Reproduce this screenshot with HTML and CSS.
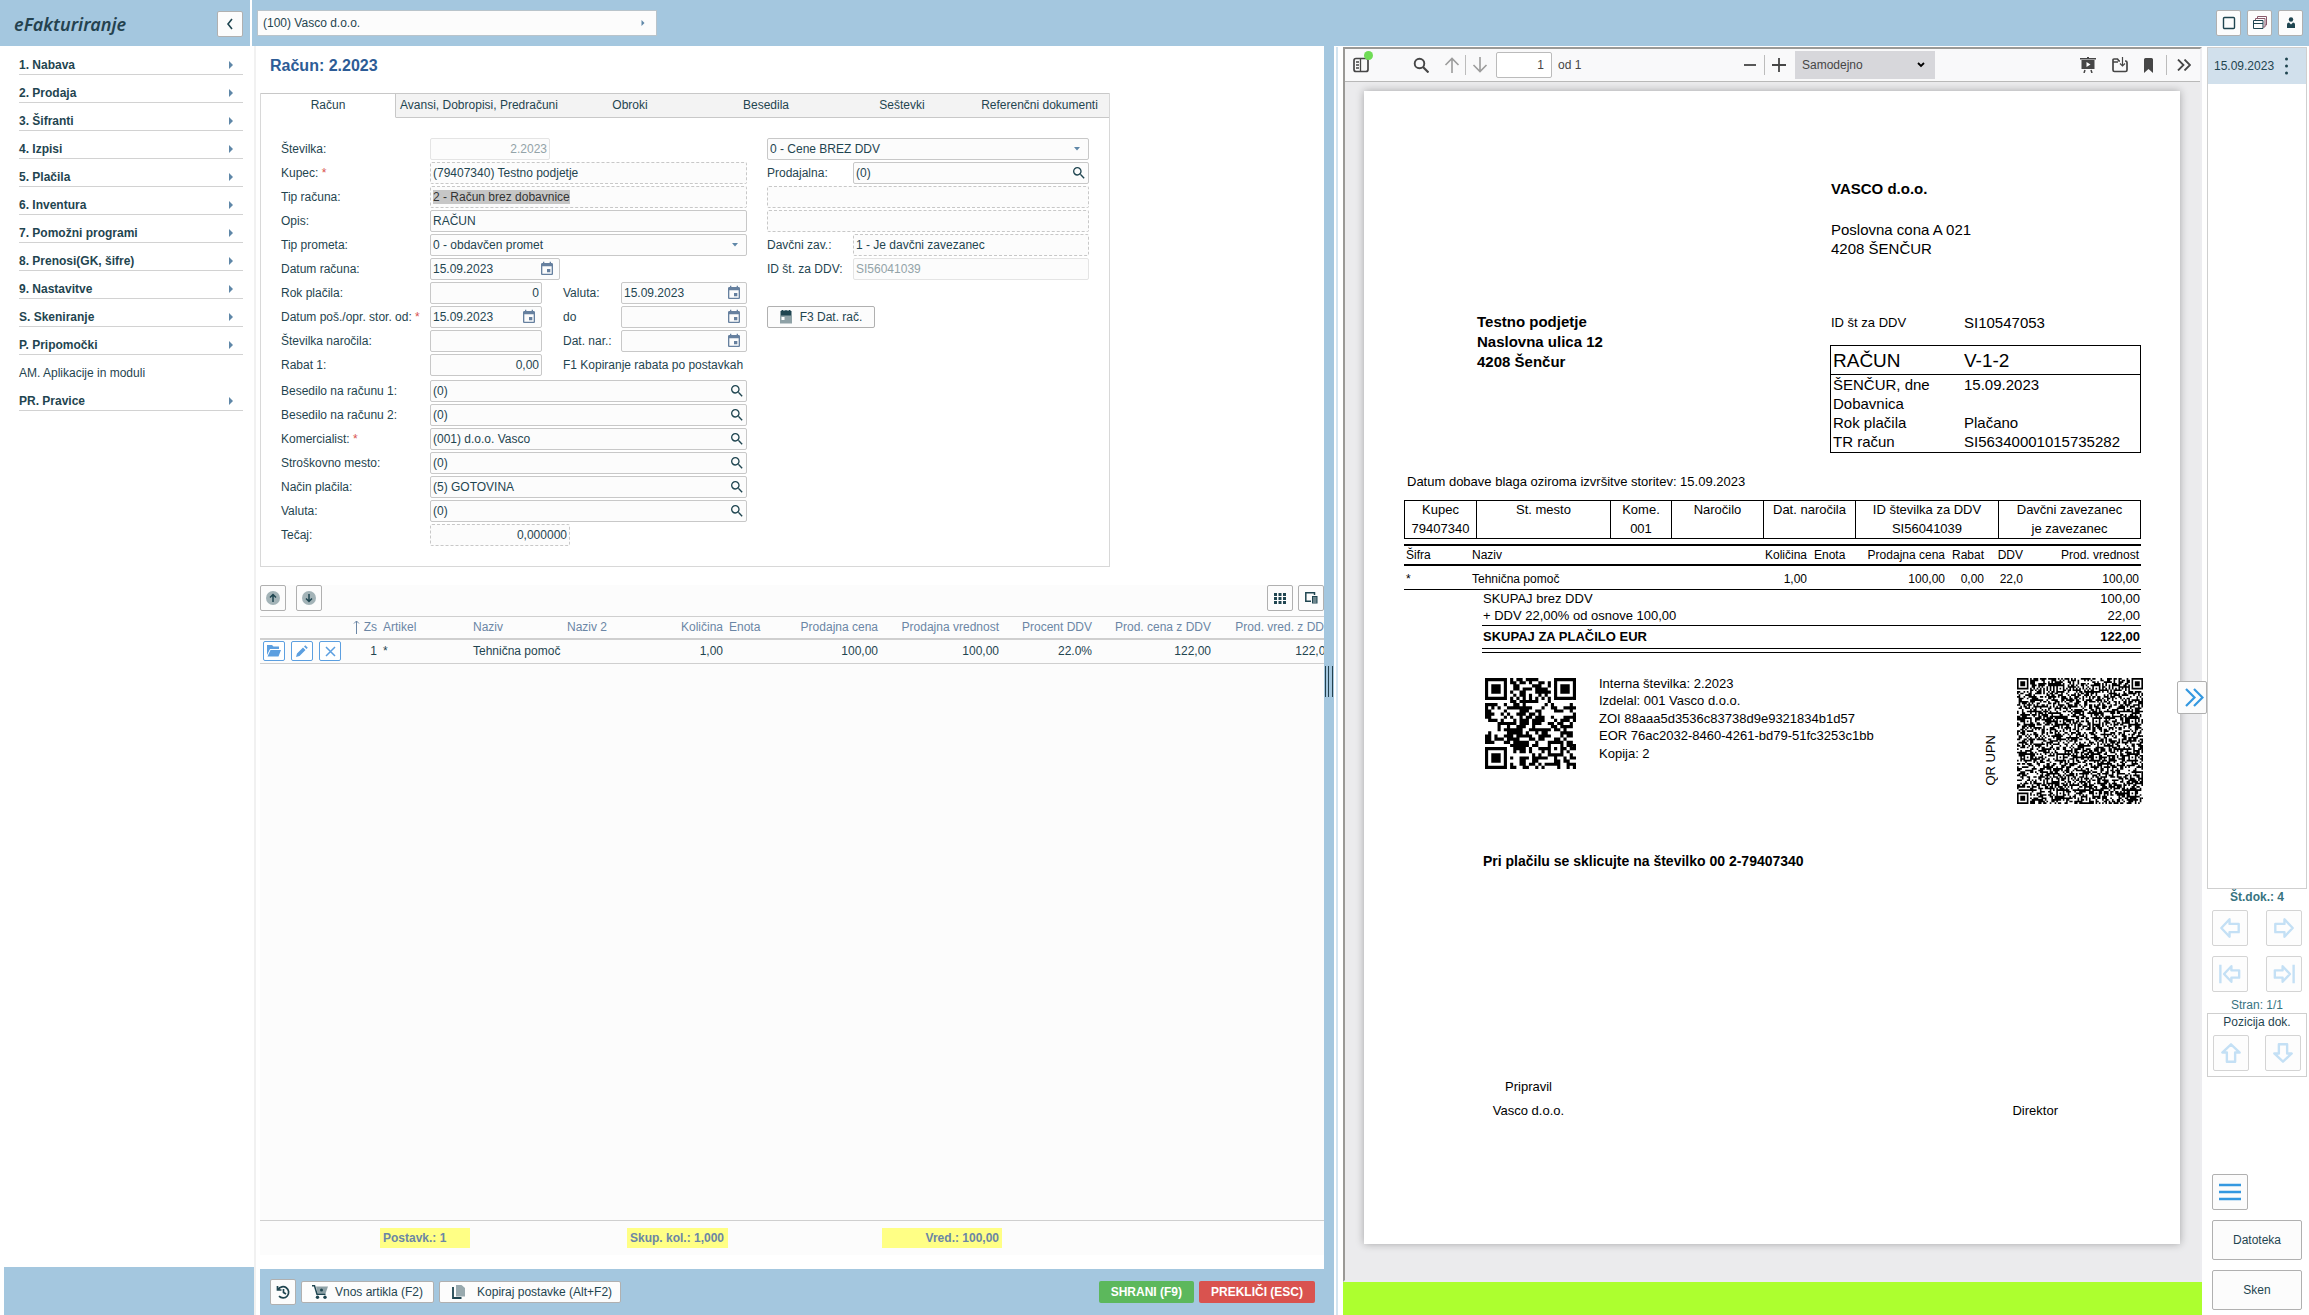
FILE: index.html
```html
<!DOCTYPE html>
<html lang="sl">
<head>
<meta charset="utf-8">
<title>eFakturiranje</title>
<link rel="stylesheet" href="styles.css">
</head>
<body>
<svg class="sprite" aria-hidden="true">
  <symbol id="i-search" viewBox="0 0 24 24"><path d="M15.5 14h-.79l-.28-.27A6.471 6.471 0 0 0 16 9.5 6.5 6.5 0 1 0 9.5 16c1.61 0 3.09-.59 4.23-1.57l.27.28v.79l5 4.99L20.49 19l-4.99-5zm-6 0C7.01 14 5 11.99 5 9.5S7.01 5 9.5 5 14 7.01 14 9.5 11.99 14 9.5 14z"/></symbol>
  <symbol id="i-cal" viewBox="0 0 24 24"><path d="M17 12h-5v5h5v-5zM16 1v2H8V1H6v2H5c-1.11 0-1.99.9-1.99 2L3 19c0 1.1.89 2 2 2h14c1.1 0 2-.9 2-2V5c0-1.1-.9-2-2-2h-1V1h-2zm3 18H5V8h14v11z"/></symbol>
  <symbol id="i-down" viewBox="0 0 6 4"><path d="M0 0h6L3 3.5z"/></symbol>
  <symbol id="i-right" viewBox="0 0 4 8"><path d="M0 0l4 4-4 4z"/></symbol>
  <symbol id="i-arrow" viewBox="0 0 24 24"><path d="M11.5 2.5L2.5 12l9 9.500v-5H21.500v-9H11.500z" fill="none" stroke="currentColor" stroke-width="2.600" stroke-linejoin="round"/></symbol>
  <symbol id="i-arrow-end" viewBox="0 0 24 24"><path d="M13.500 3.500L5.500 12l8 8.500v-4.500H22v-8h-8.500zM1.500 2v20" fill="none" stroke="currentColor" stroke-width="2.600" stroke-linejoin="round"/></symbol>
</svg>

<header class="topbar">
  <div class="brand">
    <span class="brand-name">eFakturiranje</span>
    <button class="btn collapse" aria-label="Skrij meni"><svg width="8" height="12" viewBox="0 0 8 12"><path d="M6 1L2 6l4 5" fill="none" stroke="currentColor" stroke-width="1.600"/></svg></button>
  </div>
  <div class="topbar-main">
    <button class="company"><span>(100) Vasco d.o.o.</span><svg width="4" height="6"><use href="#i-right"/></svg></button>
    <div class="window-buttons">
      <button class="btn" aria-label="Okno"><svg width="14" height="14" viewBox="0 0 14 14"><rect x="1.500" y="1.500" width="11" height="11" rx="1" fill="none" stroke="currentColor" stroke-width="1.400"/></svg></button>
      <button class="btn" aria-label="Okna"><svg width="15" height="15" viewBox="0 0 15 15"><path d="M1.500 5.500h9.500v8H1.500zM1.500 8.500H11" fill="none" stroke="currentColor"/><path d="M3.500 5V3.500h9.500v8.500h-2M5.500 3V1.500h9V10h-1.500" fill="none" stroke="#8a5a6c"/></svg></button>
      <button class="btn" aria-label="Uporabnik"><svg width="10" height="12" viewBox="0 0 10 12"><circle cx="5" cy="2.500" r="2.200"/><path d="M1 11V7.500Q1 5.500 3 5.500l2 2 2-2q2 0 2 2V11z"/></svg></button>
    </div>
  </div>
</header>

<div class="workspace">
  <aside class="sidebar">
    <nav class="menu">
      <a href="#">1. Nabava<svg width="4" height="8"><use href="#i-right"/></svg></a>
      <a href="#">2. Prodaja<svg width="4" height="8"><use href="#i-right"/></svg></a>
      <a href="#">3. Šifranti<svg width="4" height="8"><use href="#i-right"/></svg></a>
      <a href="#">4. Izpisi<svg width="4" height="8"><use href="#i-right"/></svg></a>
      <a href="#">5. Plačila<svg width="4" height="8"><use href="#i-right"/></svg></a>
      <a href="#">6. Inventura<svg width="4" height="8"><use href="#i-right"/></svg></a>
      <a href="#">7. Pomožni programi<svg width="4" height="8"><use href="#i-right"/></svg></a>
      <a href="#">8. Prenosi(GK, šifre)<svg width="4" height="8"><use href="#i-right"/></svg></a>
      <a href="#">9. Nastavitve<svg width="4" height="8"><use href="#i-right"/></svg></a>
      <a href="#">S. Skeniranje<svg width="4" height="8"><use href="#i-right"/></svg></a>
      <a href="#">P. Pripomočki<svg width="4" height="8"><use href="#i-right"/></svg></a>
      <a href="#" class="leaf">AM. Aplikacije in moduli</a>
      <a href="#">PR. Pravice<svg width="4" height="8"><use href="#i-right"/></svg></a>
    </nav>
    <div class="sidebar-foot"></div>
  </aside>

  <main class="main">
    <h1>Račun: 2.2023</h1>
    <section class="panel">
      <div class="tabs">
        <button class="tab active">Račun</button>
        <button class="tab">Avansi, Dobropisi, Predračuni</button>
        <button class="tab">Obroki</button>
        <button class="tab">Besedila</button>
        <button class="tab">Seštevki</button>
        <button class="tab">Referenčni dokumenti</button>
      </div>
      <form class="form">
        <div class="form-col left">
          <div class="row"><label for="f1">Številka:</label><div class="field w120 off"><input id="f1" class="num" value="2.2023" disabled></div></div>
          <div class="row"><label for="f2">Kupec: <i>*</i></label><div class="field dash"><input id="f2" value="(79407340) Testno podjetje" readonly></div></div>
          <div class="row"><label for="f3">Tip računa:</label><div class="field dash"><input id="f3" class="marked" value="2 - Račun brez dobavnice" readonly></div></div>
          <div class="row"><label for="f4">Opis:</label><div class="field"><input id="f4" value="RAČUN"></div></div>
          <div class="row"><label for="f5">Tip prometa:</label><div class="field"><select id="f5"><option>0 - obdavčen promet</option></select><svg class="caret" width="6" height="4"><use href="#i-down"/></svg></div></div>
          <div class="row"><label for="f6">Datum računa:</label><div class="field w130"><input id="f6" value="15.09.2023"><svg class="cal" width="16" height="16"><use href="#i-cal"/></svg></div></div>
          <div class="row"><label for="f7">Rok plačila:</label><div class="field w112"><input id="f7" class="num" value="0"></div><label class="second" for="f8">Valuta:</label><div class="field"><input id="f8" value="15.09.2023"><svg class="cal" width="16" height="16"><use href="#i-cal"/></svg></div></div>
          <div class="row"><label for="f9">Datum poš./opr. stor. od: <i>*</i></label><div class="field w112"><input id="f9" value="15.09.2023"><svg class="cal" width="16" height="16"><use href="#i-cal"/></svg></div><label class="second" for="f10">do</label><div class="field"><input id="f10"><svg class="cal" width="16" height="16"><use href="#i-cal"/></svg></div></div>
          <div class="row"><label for="f11">Številka naročila:</label><div class="field w112"><input id="f11"></div><label class="second" for="f12">Dat. nar.:</label><div class="field"><input id="f12"><svg class="cal" width="16" height="16"><use href="#i-cal"/></svg></div></div>
          <div class="row spaced"><label for="f13">Rabat 1:</label><div class="field w112"><input id="f13" class="num" value="0,00"></div><a class="note" href="#">F1 Kopiranje rabata po postavkah</a></div>
          <div class="row"><label for="f14">Besedilo na računu 1:</label><div class="field"><input id="f14" value="(0)"><svg class="find" width="16" height="16"><use href="#i-search"/></svg></div></div>
          <div class="row"><label for="f15">Besedilo na računu 2:</label><div class="field"><input id="f15" value="(0)"><svg class="find" width="16" height="16"><use href="#i-search"/></svg></div></div>
          <div class="row"><label for="f16">Komercialist: <i>*</i></label><div class="field"><input id="f16" value="(001) d.o.o. Vasco"><svg class="find" width="16" height="16"><use href="#i-search"/></svg></div></div>
          <div class="row"><label for="f17">Stroškovno mesto:</label><div class="field"><input id="f17" value="(0)"><svg class="find" width="16" height="16"><use href="#i-search"/></svg></div></div>
          <div class="row"><label for="f18">Način plačila:</label><div class="field"><input id="f18" value="(5) GOTOVINA"><svg class="find" width="16" height="16"><use href="#i-search"/></svg></div></div>
          <div class="row"><label for="f19">Valuta:</label><div class="field"><input id="f19" value="(0)"><svg class="find" width="16" height="16"><use href="#i-search"/></svg></div></div>
          <div class="row"><label for="f20">Tečaj:</label><div class="field dash w140"><input id="f20" class="num" value="0,000000" readonly></div></div>
        </div>
        <div class="form-col right">
          <div class="row"><div class="field"><select aria-label="Cene"><option>0 - Cene BREZ DDV</option></select><svg class="caret" width="6" height="4"><use href="#i-down"/></svg></div></div>
          <div class="row"><label for="g1">Prodajalna:</label><div class="field"><input id="g1" value="(0)"><svg class="find" width="16" height="16"><use href="#i-search"/></svg></div></div>
          <div class="row"><div class="field dash"><input aria-label="Naslov 1" readonly></div></div>
          <div class="row"><div class="field dash"><input aria-label="Naslov 2" readonly></div></div>
          <div class="row"><label for="g2">Davčni zav.:</label><div class="field dash"><input id="g2" value="1 - Je davčni zavezanec" readonly></div></div>
          <div class="row"><label for="g3">ID št. za DDV:</label><div class="field off"><input id="g3" value="SI56041039" disabled></div></div>
          <div class="row"></div>
          <div class="row"><button type="button" class="btn date-btn"><svg width="12" height="14" viewBox="0 0 12 14"><path d="M1 1h10v4H1zM2.500 0v2M6 0v2M9.500 0v2" stroke="currentColor"/><path d="M0 5h12v8.500H0z" opacity=".5"/><rect x="1.500" y="7" width="3" height="3" fill="#fff"/></svg>F3 Dat. rač.</button></div>
        </div>
      </form>
    </section>

    <section class="items">
      <div class="items-tools">
        <button class="btn sq" aria-label="Gor"><svg width="14" height="14" viewBox="0 0 14 14"><circle cx="7" cy="7" r="7" opacity=".4"/><path d="M7 11V3.500M4 6.500l3-3 3 3" fill="none" stroke="currentColor" stroke-width="1.500"/></svg></button>
        <button class="btn sq" aria-label="Dol"><svg width="14" height="14" viewBox="0 0 14 14"><circle cx="7" cy="7" r="7" opacity=".4"/><path d="M7 3v7.500M4 7.500l3 3 3-3" fill="none" stroke="currentColor" stroke-width="1.500"/></svg></button>
        <span class="grow"></span>
        <button class="btn sq" aria-label="Stolpci"><svg width="12" height="11" viewBox="0 0 12 11"><path d="M0 0h3v3H0zM4.500 0h3v3h-3zM9 0h3v3H9zM0 4h3v3H0zM4.500 4h3v3h-3zM9 4h3v3H9zM0 8h3v3H0zM4.500 8h3v3h-3zM9 8h3v3H9z"/></svg></button>
        <button class="btn sq" aria-label="Izvoz"><svg width="13" height="12" viewBox="0 0 13 12"><path d="M9.500 3V.8H.8v8.500H6" fill="none" stroke="currentColor" stroke-width="1.500"/><path d="M7 4h5.500v7.500H7z"/><path d="M8 6h3.500M8 8h3.500M8 10h3.500" stroke="#fff" stroke-width=".7"/></svg></button>
      </div>
      <div class="table-wrap">
        <table class="grid">
          <colgroup><col class="c90"><col class="c30"><col class="c90"><col class="c94"><col class="c76"><col class="c86"><col class="c64"><col class="c91"><col class="c121"><col class="c93"><col class="c119"><col class="c121"></colgroup>
          <thead><tr><th></th><th class="r sorted"><span class="zs"><svg width="7" height="14" viewBox="0 0 7 14"><path d="M3.500 14V1M1 3.500L3.500 1 6 3.500" fill="none" stroke="currentColor"/></svg>Zs</span></th><th>Artikel</th><th>Naziv</th><th>Naziv 2</th><th class="r">Količina</th><th>Enota</th><th class="r">Prodajna cena</th><th class="r">Prodajna vrednost</th><th class="r">Procent DDV</th><th class="r">Prod. cena z DDV</th><th class="r">Prod. vred. z DDV</th></tr></thead>
          <tbody><tr>
            <td><div class="acts">
              <button aria-label="Odpri"><svg width="14" height="12" viewBox="0 0 14 12"><path d="M0 0h5l1.500 1.500H12V4H3L0 10zM3.500 5H14l-2.500 6.500H.5z"/></svg></button>
              <button aria-label="Uredi"><svg width="12" height="12" viewBox="0 0 12 12"><path d="M0 12l1-3.500 6-6L9.500 5l-6 6zM8 1.500L9.300.2l2.500 2.500-1.300 1.300z"/></svg></button>
              <button aria-label="Briši"><svg width="11" height="11" viewBox="0 0 11 11"><path d="M1 1l9 9M10 1l-9 9" stroke="currentColor" stroke-width="1.500"/></svg></button>
            </div></td><td class="r">1</td><td>*</td><td>Tehnična pomoč</td><td></td><td class="r">1,00</td><td></td><td class="r">100,00</td><td class="r">100,00</td><td class="r">22.0%</td><td class="r">122,00</td><td class="r">122,00</td>
          </tr></tbody>
        </table>
      </div>
      <div class="sums"><span class="sum s1">Postavk.: 1</span><span class="sum s2">Skup. kol.: 1,000</span><span class="sum s3">Vred.: 100,00</span></div>
    </section>

    <footer class="actions">
      <button class="btn sq" aria-label="Zgodovina"><svg width="14" height="14" viewBox="0 0 14 14"><path d="M2.200 4.500A5.600 5.600 0 1 1 3 11.200M1.500 1v4h4M7.500 4v3.500l2.500 1.500" fill="none" stroke="currentColor" stroke-width="1.700"/></svg></button>
      <button class="btn txt"><svg width="16" height="14" viewBox="0 0 16 14"><path d="M0 .8h2.500L5 9.300h8.500" fill="none" stroke="currentColor" stroke-width="1.500"/><path d="M4 1.500h12L13.500 8.500H5.500z" opacity=".5"/><circle cx="9.500" cy="5" r="1.500"/><circle cx="5.500" cy="12.300" r="1.700"/><circle cx="13" cy="12.300" r="1.700"/></svg>Vnos artikla (F2)</button>
      <button class="btn txt copy"><svg width="13" height="14" viewBox="0 0 13 14"><path d="M1 2v11h8.500" fill="none" stroke="currentColor" stroke-width="1.800"/><path d="M4 0h5.500L13 3v8.500H4z" opacity=".45"/></svg>Kopiraj postavke (Alt+F2)</button>
      <span class="grow"></span>
      <button class="save">SHRANI (F9)</button>
      <button class="cancel">PREKLIČI (ESC)</button>
    </footer>
  </main>

  <div class="splitter"><span class="grip"></span></div>

  <section class="viewer-wrap">
    <div class="viewer">
      <div class="pdf-tools">
        <button class="pdf-side" aria-label="Stranska vrstica"><svg width="16" height="16" viewBox="0 0 16 16"><rect x="1" y="1.500" width="14" height="13" rx="2" fill="none" stroke="currentColor" stroke-width="1.700"/><path d="M7.500 2v12.500M3 5h3M3 8h3M3 11h3" stroke="currentColor" stroke-width="1.300"/></svg><span class="dot"></span></button>
        <button aria-label="Najdi"><svg width="16" height="16" viewBox="0 0 16 16"><circle cx="6.500" cy="6.500" r="4.800" fill="none" stroke="currentColor" stroke-width="1.900"/><path d="M10 10l5.500 5.500" stroke="currentColor" stroke-width="2.200"/></svg></button>
        <button class="dim up" aria-label="Prejšnja"><svg width="16" height="16" viewBox="0 0 16 16"><path d="M8 16V1.500M1.500 8L8 1.500 14.500 8" fill="none" stroke="currentColor" stroke-width="1.600"/></svg></button>
        <span class="sep"></span>
        <button class="dim down" aria-label="Naslednja"><svg width="16" height="16" viewBox="0 0 16 16"><path d="M8 0v14.500M1.500 8L8 14.500 14.500 8" fill="none" stroke="currentColor" stroke-width="1.600"/></svg></button>
        <input class="page-no" value="1" aria-label="Stran"><span class="of">od 1</span>
        <span class="grow"></span>
        <button aria-label="Pomanjšaj"><svg width="14" height="14" viewBox="0 0 14 14"><path d="M1 7h12" stroke="currentColor" stroke-width="1.800"/></svg></button>
        <span class="sep zoom-sep"></span>
        <button aria-label="Povečaj"><svg width="14" height="14" viewBox="0 0 14 14"><path d="M0 7h14M7 0v14" stroke="currentColor" stroke-width="1.800"/></svg></button>
        <div class="scale"><select aria-label="Povečava"><option>Samodejno</option></select><svg width="8" height="6" viewBox="0 0 8 6"><path d="M1 1l3 3 3-3" fill="none" stroke="#000" stroke-width="1.800"/></svg></div>
        <span class="grow"></span>
        <div class="pdf-right">
          <button aria-label="Predstavitev"><svg width="16" height="16" viewBox="0 0 16 16"><path d="M0 1h16v1.500H0zM1.500 3h13v9h-13zM7 0h2v2H7z"/><path d="M6.500 5v5l4-2.500z" fill="#fff"/><path d="M4 16l1-3M12 16l-1-3" stroke="currentColor" stroke-width="1.500"/></svg></button>
          <button aria-label="Odpri"><svg width="16" height="16" viewBox="0 0 16 16"><path d="M8 4H7L5.500 2H2Q1 2 1 3v10q0 1.500 1.500 1.500h11Q15 14.500 15 13V5.500Q15 4 13.500 4H13M1 5h5" fill="none" stroke="currentColor" stroke-width="1.700"/><path d="M10.500 0v8.500M8 6.500L10.500 9 13 6.500" fill="none" stroke="currentColor" stroke-width="1.200"/></svg></button>
          <button aria-label="Zaznamek"><svg width="9" height="15" viewBox="0 0 9 15"><path d="M0 1.500Q0 0 1.500 0h6Q9 0 9 1.500V15l-4.500-4L0 15z"/></svg></button>
          <span class="sep"></span>
          <button aria-label="Orodja"><svg width="14" height="12" viewBox="0 0 14 12"><path d="M1 .5L6.500 6 1 11.500M7.500.5L13 6l-5.500 5.500" fill="none" stroke="currentColor" stroke-width="1.800"/></svg></button>
        </div>
      </div>
      <div class="pdf-body">
        <article class="sheet">
          <div class="sender"><strong>VASCO d.o.o.</strong><span>Poslovna cona A 021</span><span>4208 ŠENČUR</span></div>
          <div class="parties">
            <address>Testno podjetje<br>Naslovna ulica 12<br>4208 Šenčur</address>
            <div>
              <div class="vat"><span>ID št za DDV</span><span>SI10547053</span></div>
              <dl class="docbox">
                <div class="head"><dt>RAČUN</dt><dd>V-1-2</dd></div>
                <div><dt>ŠENČUR, dne</dt><dd>15.09.2023</dd></div>
                <div><dt>Dobavnica</dt><dd></dd></div>
                <div><dt>Rok plačila</dt><dd>Plačano</dd></div>
                <div><dt>TR račun</dt><dd>SI56340001015735282</dd></div>
              </dl>
            </div>
          </div>
          <p class="supply">Datum dobave blaga oziroma izvršitve storitev: 15.09.2023</p>
          <table class="meta">
            <colgroup><col class="c72"><col class="c134"><col class="c61"><col class="c92"><col class="c92"><col class="c143"><col></colgroup>
            <tr><th>Kupec</th><th>St. mesto</th><th>Kome.</th><th>Naročilo</th><th>Dat. naročila</th><th>ID številka za DDV</th><th>Davčni zavezanec</th></tr>
            <tr><td>79407340</td><td></td><td>001</td><td></td><td></td><td>SI56041039</td><td>je zavezanec</td></tr>
          </table>
          <table class="lines">
            <colgroup><col class="c66"><col><col class="c69"><col class="c51"><col class="c87"><col class="c39"><col class="c39"><col class="c116"></colgroup>
            <thead><tr><th>Šifra</th><th>Naziv</th><th class="r">Količina</th><th class="unit">Enota</th><th class="r">Prodajna cena</th><th class="r">Rabat</th><th class="r">DDV</th><th class="r">Prod. vrednost</th></tr></thead>
            <tbody><tr><td>*</td><td>Tehnična pomoč</td><td class="r">1,00</td><td></td><td class="r">100,00</td><td class="r">0,00</td><td class="r">22,0</td><td class="r">100,00</td></tr></tbody>
          </table>
          <div class="totals">
            <div><span>SKUPAJ brez DDV</span><span>100,00</span></div>
            <div><span>+ DDV 22,00% od osnove 100,00</span><span>22,00</span></div>
            <div class="due"><span>SKUPAJ ZA PLAČILO EUR</span><span>122,00</span></div>
          </div>
          <div class="codes">
            <svg class="qr small" data-size="29" data-seed="7" data-align="22"></svg>
            <div class="code-text"><span>Interna številka: 2.2023</span><span>Izdelal: 001 Vasco d.o.o.</span><span>ZOI 88aaa5d3536c83738d9e9321834b1d57</span><span>EOR 76ac2032-8460-4261-bd79-51fc3253c1bb</span><span>Kopija: 2</span></div>
            <span class="grow"></span>
            <span class="upn">QR UPN</span>
            <svg class="qr large" data-size="77" data-seed="31" data-align="6,26,48,70"></svg>
          </div>
          <p class="refer">Pri plačilu se sklicujte na številko 00 2-79407340</p>
          <div class="sign"><div><span>Pripravil</span><span>Vasco d.o.o.</span></div><div class="director">Direktor</div></div>
        </article>
      </div>
    </div>
    <div class="status"></div>
  </section>

  <aside class="docs">
    <button class="btn hide-docs" aria-label="Skrij"><svg width="19" height="19" viewBox="0 0 19 19"><path d="M1 1l8.500 8.500L1 18M9 1l8.500 8.500L9 18" fill="none" stroke="currentColor" stroke-width="2.200"/></svg></button>
    <div class="doc-list"><a class="doc" href="#">15.09.2023<svg width="3" height="18" viewBox="0 0 3 18"><circle cx="1.500" cy="2" r="1.500"/><circle cx="1.500" cy="9" r="1.500"/><circle cx="1.500" cy="16" r="1.500"/></svg></a></div>
    <div class="count">Št.dok.: 4</div>
    <div class="pair"><button class="nav" aria-label="Nazaj"><svg width="22" height="22"><use href="#i-arrow"/></svg></button><button class="nav" aria-label="Naprej"><svg class="flip" width="22" height="22"><use href="#i-arrow"/></svg></button></div>
    <div class="pair"><button class="nav" aria-label="Prvi"><svg width="22" height="22"><use href="#i-arrow-end"/></svg></button><button class="nav" aria-label="Zadnji"><svg class="flip" width="22" height="22"><use href="#i-arrow-end"/></svg></button></div>
    <div class="pageinfo">Stran: 1/1</div>
    <div class="position"><span>Pozicija dok.</span><div class="pair"><button class="nav" aria-label="Višje"><svg class="turn-up" width="22" height="22"><use href="#i-arrow"/></svg></button><button class="nav" aria-label="Nižje"><svg class="turn-down" width="22" height="22"><use href="#i-arrow"/></svg></button></div></div>
    <span class="grow"></span>
    <button class="btn lines-btn" aria-label="Meni"><svg width="22" height="18" viewBox="0 0 22 18"><path d="M0 2h22M0 9h22M0 16h22" stroke="currentColor" stroke-width="2.600"/></svg></button>
    <button class="btn wide">Datoteka</button>
    <button class="btn wide">Sken</button>
  </aside>
</div>
<script src="qr.js"></script>
</body>
</html>
```
FILE: styles.css
```css
* { box-sizing: border-box; }
html { height: 100%; }
body {
  margin: 0;
  min-height: 100vh;
  display: flex;
  flex-direction: column;
  background: #fff;
  color: #1f4550;
  font: 12px/16px "Liberation Sans", Arial, sans-serif;
}
button, input, select { font: inherit; color: inherit; margin: 0; }
button { cursor: pointer; padding: 0; white-space: nowrap; }
a { color: inherit; text-decoration: none; }
svg { fill: currentColor; flex: none; display: block; }
.sprite { position: absolute; width: 0; height: 0; }
.grow { flex: 1; }
.btn {
  display: flex;
  align-items: center;
  justify-content: center;
  border: 1px solid #b0b0b0;
  border-radius: 2px;
  background: #fcfcfc;
}
.sq { width: 26px; height: 26px; }

/* top bar */
.topbar { display: flex; gap: 2px; height: 46px; }
.brand, .topbar-main { background: #a4c7df; display: flex; align-items: center; }
.brand { width: 250px; padding: 2px 7px 0 14px; justify-content: space-between; }
.brand-name { font: italic 600 18px/24px "Noto Sans", sans-serif; color: #24424f; }
.collapse { width: 26px; height: 26px; }
.topbar-main { flex: 1; justify-content: space-between; padding: 0 6px 1px 5px; }
.company {
  display: flex;
  align-items: center;
  justify-content: space-between;
  width: 400px;
  height: 26px;
  padding: 0 11px 0 5px;
  border: 1px solid #b9c4cb;
  background: #fcfcfc;
}
.company svg { color: #5f87a8; }
.window-buttons { display: flex; gap: 6px; }
.window-buttons .btn { width: 25px; height: 26px; }

.workspace { flex: 1; display: flex; min-height: 0; }

/* menu */
.sidebar {
  width: 256px;
  display: flex;
  flex-direction: column;
  justify-content: space-between;
  border-right: 2px solid #f1f1f1;
}
.menu { padding: 1px 11px 0 19px; }
.menu a {
  display: flex;
  align-items: center;
  justify-content: space-between;
  height: 28px;
  padding: 9px 10px 0 0;
  border-bottom: 1px solid #d2d2d2;
  font-weight: bold;
}
.menu .leaf { font-weight: normal; border-color: transparent; }
.menu svg { color: #5f87a8; }
.sidebar-foot { height: 48px; margin-left: 4px; background: #a4c7df; }

/* main column */
.main { flex: 1064; min-width: 0; margin-left: 4px; display: flex; flex-direction: column; }
h1 { margin: 10px 0 17px 10px; font: bold 16px/20px "Liberation Sans", Arial, sans-serif; color: #2d5c96; }
.panel { width: 850px; border: 1px solid #d8d8d8; border-top: 0; }
.tabs {
  display: grid;
  grid-template-columns: 135px 166px 136px 136px 136px 1fr;
  border-top: 1px solid #c8c8c8;
}
.tab { height: 24px; padding-bottom: 2px; border: 0; border-bottom: 1px solid #c8c8c8; background: #f3f3f3; }
.tab.active { background: #fff; border-bottom-color: #fff; border-right: 1px solid #c8c8c8; }
.form { display: flex; gap: 20px; padding: 20px 20px 20px; }
.form-col { display: flex; flex-direction: column; gap: 2px; }
.form-col.left { width: 466px; }
.form-col.right { width: 322px; }
.row { display: flex; align-items: center; height: 22px; }
.spaced { margin-bottom: 2px; }
.row label { width: 149px; }
.row label i { color: #d9534f; font-style: normal; }
.right .row label { width: 86px; }
.row .second { width: 58px; margin-left: 21px; }
.row .note { margin-left: 21px; }
.field {
  flex: 1;
  min-width: 0;
  display: flex;
  align-items: center;
  height: 22px;
  border: 1px solid #c8c8c8;
  border-radius: 2px;
  background: #fcfcfc;
}
.field.dash { border-style: dashed; }
.field.off { border-color: #e4e4e4; color: #93a3a8; }
.w112, .w120, .w130, .w140 { flex: none; }
.w112 { width: 112px; }
.w120 { width: 120px; }
.w130 { width: 130px; }
.w140 { width: 140px; }
.field input, .field select {
  flex: 1;
  min-width: 0;
  border: 0;
  padding: 0 2px;
  background: none;
  appearance: none;
  outline: 0;
}
.field input.marked { flex: none; field-sizing: content; margin-left: 2px; padding: 0; height: 14px; background: #c6c6c6; color: #333; }
.num { text-align: right; }
.cal { color: #66809f; margin-right: 4px; }
.find { margin-right: 1px; }
.caret { color: #5f87a8; margin-right: 8px; }
.date-btn { width: 108px; height: 22px; gap: 8px; }

/* invoice lines */
.items { flex: 1; margin-top: 18px; background: #fcfcfc; display: flex; flex-direction: column; }
.items-tools { display: flex; gap: 5px; height: 31px; }
.items-tools .sq:first-child { margin-right: 5px; }
.table-wrap { flex: 1; overflow: hidden; }
.grid { table-layout: fixed; width: 1075px; border-collapse: collapse; }
.grid th, .grid td { padding: 0 3px; white-space: nowrap; text-align: left; }
.grid th { height: 22px; font-weight: normal; color: #6b86a5; border-top: 1px solid #cfcfcf; border-bottom: 2px solid #cfcfcf; }
.grid td { height: 25px; border-bottom: 1px solid #cfcfcf; }
.grid .r, .lines .r { text-align: right; }
.zs { display: flex; justify-content: space-between; align-items: center; }
.acts { display: flex; gap: 6px; }
.acts button {
  display: flex;
  align-items: center;
  justify-content: center;
  width: 22px;
  height: 20px;
  border: 1px solid #5c9fe0;
  border-radius: 2px;
  background: #fff;
  color: #5c9fe0;
}
.sums { display: flex; height: 35px; padding: 7px 0 0 120px; border-top: 1px solid #cfcfcf; }
.sum { height: 20px; padding: 0 3px; background: #ffff85; color: #6b86a5; font-weight: bold; line-height: 20px; white-space: nowrap; }
.s1 { width: 90px; margin-right: 157px; }
.s2 { width: 101px; margin-right: 154px; }
.s3 { width: 120px; text-align: right; }

.actions { display: flex; align-items: center; gap: 5px; height: 46px; margin-top: 14px; padding: 0 19px 0 10px; background: #a4c7df; margin-right: -10px; }
.txt { height: 22px; gap: 7px; padding: 0 10px; }
.copy { gap: 12px; padding: 0 8px 0 12px; }
.save, .cancel { height: 22px; padding: 0 12px; border: 0; border-radius: 2px; color: #fff; font-weight: bold; }
.save { background: #5cb85c; }
.cancel { background: #d9534f; }

.splitter { width: 10px; margin-bottom: 46px; background: #a4c7df; }
.grip { display: block; width: 8px; height: 31px; margin: 620px 0 0 1px; border: 1px solid #24424f; border-width: 0 1px; background: linear-gradient(90deg, transparent 2px, #24424f 2px, #24424f 3px, transparent 3px); }

/* document viewer */
.viewer-wrap { flex: 859; min-width: 0; margin: 1px 0 0 2px; padding-left: 5px; border-left: 2px solid #d3e4f0; display: flex; flex-direction: column; }
.viewer { flex: 1; display: flex; flex-direction: column; border: 2px solid #eee; border-color: #9a9996 #ededf0 #ededf0 #9a9996; background: #ebebed; }
.status { height: 33px; background: #adff2f; }
.pdf-tools { display: flex; align-items: center; height: 33px; padding: 0 9px 0 8px; background: #f9f9fa; border-bottom: 1px solid #b8b8b8; color: #464646; }
.pdf-tools button { display: flex; border: 0; background: none; }
.pdf-tools .pdf-side { position: relative; margin-right: 44px; }
.dot { position: absolute; left: 11px; top: -6px; width: 9px; height: 9px; border-radius: 50%; background: #6fdc55; }
.pdf-tools .dim { color: #9c9c9c; }
.pdf-tools .up { margin: 0 5px 0 15px; }
.pdf-tools .down { margin: 0 8px 0 6px; }
.sep { width: 1px; height: 20px; background: #bcbcbc; }
.zoom-sep { margin: 0 7px; }
.page-no { width: 56px; height: 26px; padding: 0 7px; border: 1px solid #bbb; border-radius: 2px; background: #fff; text-align: right; }
.of { width: 40px; margin-left: 6px; }
.scale { display: flex; align-items: center; width: 140px; height: 28px; margin-left: 9px; padding: 0 10px 0 7px; background: #d7d7db; }
.scale select { flex: 1; border: 0; padding: 0; background: none; appearance: none; }
.pdf-right { display: flex; align-items: center; gap: 16px; }
.pdf-right .sep { margin: 0 -6px 0 -3px; }

.pdf-body { flex: 1; display: flex; padding: 9px 20px 36px 19px; }
.sheet { flex: 1; padding: 88px 39px 0 40px; background: #fff; box-shadow: 0 0 8px rgba(0, 0, 0, .3); color: #000; font-size: 13px; }
.sheet table { width: 100%; table-layout: fixed; border-collapse: collapse; }
.sheet p { margin: 0; line-height: 18px; }
.sender { display: flex; flex-direction: column; margin-left: 427px; font-size: 15px; line-height: 19px; }
.sender strong { margin-bottom: 21px; line-height: 20px; }
.parties { display: grid; grid-template-columns: 426px 1fr; margin-top: 54px; font-size: 15px; }
.parties address { padding-left: 73px; font: bold 15px/20px "Liberation Sans", Arial, sans-serif; }
.vat { display: flex; padding: 1px 0 0 1px; line-height: 20px; }
.vat span:first-child { width: 133px; font-size: 13px; }
.docbox { margin: 12px 0 0; border: 1px solid #000; padding-bottom: 1px; line-height: 19px; }
.docbox div { display: flex; padding-left: 2px; min-height: 19px; }
.docbox dt { width: 131px; }
.docbox dd { margin: 0; }
.docbox .head { height: 29px; border-bottom: 1px solid #000; font-size: 19px; line-height: 30px; }
.sheet .supply { margin: 20px 0 9px; padding-left: 3px; }
.meta { border: 1px solid #000; }
.meta th, .meta td { height: 19px; padding: 0; border: solid #000; border-width: 0 1px; font-weight: normal; text-align: center; }
.lines { margin-top: 5px; font-size: 12px; }
.lines th, .lines td { padding: 0 2px; text-align: left; white-space: nowrap; font-weight: normal; }
.lines th { height: 20px; border-top: 2px solid #000; border-bottom: 2px solid #000; }
.lines th.unit { padding-left: 5px; }
.lines td { height: 24px; padding-top: 3px; border-bottom: 1px solid #000; }
.totals { margin-left: 78px; line-height: 17px; border-bottom: 1px solid #000; padding-bottom: 3px; }
.totals div { display: flex; justify-content: space-between; padding: 0 1px; }
.totals .due { margin-top: 1px; border-top: 1px solid #000; border-bottom: 1px solid #000; line-height: 22px; font-weight: bold; }
.codes { display: flex; margin: 25px -2px 0 81px; }
.qr.small { width: 91px; height: 91px; margin-right: 23px; }
.qr.large { width: 126px; height: 126px; }
.code-text { display: flex; flex-direction: column; justify-content: space-between; height: 87px; margin-top: -3px; line-height: 17px; }
.upn { align-self: center; margin: 40px 18px 0 0; writing-mode: vertical-rl; transform: rotate(180deg); }
.sheet .refer { margin-top: 48px; padding-left: 79px; font-size: 14px; font-weight: bold; }
.sign { display: flex; justify-content: space-between; align-items: flex-end; margin-top: 208px; padding: 0 83px 0 77px; line-height: 18px; }
.sign div:first-child { display: flex; flex-direction: column; gap: 6px; width: 95px; text-align: center; }

/* scanned documents */
.docs { position: relative; width: 107px; padding: 1px 2px 5px 5px; display: flex; flex-direction: column; }
.hide-docs { position: absolute; left: -25px; top: 635px; width: 30px; height: 33px; padding-left: 5px; color: #3498e0; }
.doc-list { height: 842px; border: 1px solid #cfcfcf; }
.doc { display: flex; align-items: center; justify-content: space-between; height: 36px; padding: 0 18px 0 6px; background: #d1e0ec; }
.count, .pageinfo { text-align: center; color: #37737f; }
.count { font-weight: bold; margin-bottom: 5px; }
.pair { display: flex; justify-content: space-between; padding: 0 5px; margin-bottom: 10px; }
.nav { display: flex; align-items: center; justify-content: center; width: 36px; height: 36px; border: 1px solid #d4d4d4; border-radius: 2px; background: #fdfdfd; color: #c4e0f5; }
.flip { transform: rotate(180deg); }
.turn-up { transform: rotate(90deg); }
.turn-down { transform: rotate(-90deg); }
.pageinfo { margin-top: -5px; }
.position { border: 1px solid #cfcfcf; text-align: center; }
.position .pair { margin: 5px 0; }
.lines-btn { width: 36px; height: 36px; margin: 0 5px 10px; color: #3498e0; }
.wide { height: 40px; margin: 0 5px 10px; }
.wide:last-child { margin-bottom: 0; }

/* column widths */
.c30 { width: 30px; } .c39 { width: 39px; } .c51 { width: 51px; } .c61 { width: 61px; }
.c64 { width: 64px; } .c66 { width: 66px; } .c69 { width: 69px; } .c72 { width: 72px; }
.c76 { width: 76px; } .c86 { width: 86px; } .c87 { width: 87px; } .c90 { width: 90px; }
.c91 { width: 91px; } .c92 { width: 92px; } .c93 { width: 93px; } .c94 { width: 94px; }
.c116 { width: 116px; } .c119 { width: 119px; } .c121 { width: 121px; } .c134 { width: 134px; } .c143 { width: 143px; }
```
FILE: qr.js
```js
// Draws the QR symbols: finder, timing and alignment patterns over a seeded data field.
document.querySelectorAll("svg.qr").forEach(function (svg) {
  var n = +svg.dataset.size, seed = +svg.dataset.seed;
  var marks = svg.dataset.align.split(",").map(Number);
  function rnd() { seed = (seed * 1103515245 + 12345) % 2147483648; return seed / 2147483648; }
  var m = [];
  for (var y = 0; y < n; y++) {
    m.push([]);
    for (var x = 0; x < n; x++) m[y].push(rnd() < 0.52);
  }
  for (var i = 0; i < n; i++) { m[6][i] = i % 2 === 0; m[i][6] = i % 2 === 0; }
  function ring(cx, cy, r) {
    for (var dy = -r; dy <= r; dy++) for (var dx = -r; dx <= r; dx++) {
      var d = Math.max(Math.abs(dx), Math.abs(dy)), px = cx + dx, py = cy + dy;
      if (px < 0 || py < 0 || px >= n || py >= n) continue;
      m[py][px] = r === 4 ? d !== 4 && d !== 2 : d !== 1;
    }
  }
  marks.forEach(function (a) { marks.forEach(function (b) {
    var corner = (a < 9 && b < 9) || (a < 9 && b > n - 9) || (a > n - 9 && b < 9);
    if (!corner) ring(a, b, 2);
  }); });
  ring(3, 3, 4); ring(n - 4, 3, 4); ring(3, n - 4, 4);
  var d = "";
  m.forEach(function (row, y) { row.forEach(function (on, x) { if (on) d += "M" + x + " " + y + "h1v1h-1z"; }); });
  svg.setAttribute("viewBox", "0 0 " + n + " " + n);
  svg.innerHTML = '<path d="' + d + '"/>';
});
```
